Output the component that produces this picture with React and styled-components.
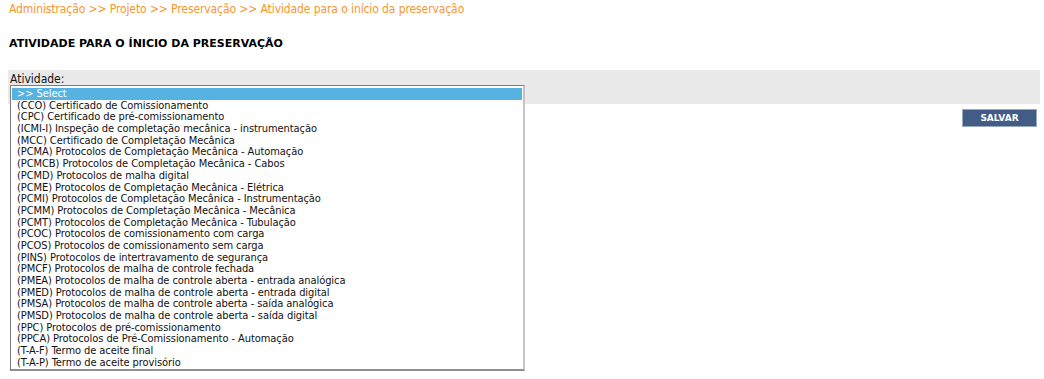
import React from "react";
import styled, { createGlobalStyle } from "styled-components";

const Global = createGlobalStyle`
  html, body { margin: 0; padding: 0; background: #fff; }
  body { font-family: "DejaVu Sans Condensed", "DejaVu Sans", Verdana, sans-serif; }
`;

const Page = styled.div`
  width: 1044px;
  height: 379px;
  overflow: hidden;
  display: flex;
  flex-direction: column;
`;

const Breadcrumb = styled.div`
  padding: 2px 0 0 9px;
  font-size: 12px;
  line-height: 15px;
  letter-spacing: -0.1px;
  color: #f7962f;
`;

const Title = styled.h1`
  margin: 20px 0 0 9px;
  font-family: "DejaVu Sans", Verdana, sans-serif;
  font-size: 11px;
  line-height: 14px;
  font-weight: bold;
  color: #000;
`;

const FieldBar = styled.div`
  margin: 19px 4px 0 8px;
  height: 34px;
  background: #e9e9e9;
  position: relative;
`;

const Label = styled.label`
  display: block;
  padding: 2px 0 0 2px;
  font-size: 12px;
  line-height: 14px;
  color: #111;
`;

const ListBox = styled.div`
  position: absolute;
  left: 2px;
  top: 15px;
  width: 515px;
  height: 286px;
  box-sizing: border-box;
  background: #fff;
  border-top: 1px solid #7a7a7a;
  border-left: 1px solid #7a7a7a;
  border-right: 2px solid #c4c4c4;
  border-bottom: 2px solid #8f8f8f;
  padding: 2px 1px 0 1px;
  z-index: 2;
`;

const Option = styled.div`
  height: 11.7px;
  line-height: 11.7px;
  padding-left: 5px;
  font-size: 11px;
  letter-spacing: -0.07px;
  white-space: nowrap;
  color: ${(p) => (p.$selected ? "#fff" : "#111")};
  background: ${(p) => (p.$selected ? "#56b3e1" : "transparent")};
`;

const Actions = styled.div`
  display: flex;
  justify-content: flex-end;
  padding: 5px 7px 0 0;
`;

const Button = styled.button`
  width: 75px;
  height: 18px;
  border: 1px solid #9aa9c0;
  background: #425c85;
  color: #fff;
  font-family: "DejaVu Sans", Verdana, sans-serif;
  font-size: 9px;
  font-weight: bold;
  padding: 0;
  cursor: pointer;
`;

const options = [
  ">> Select",
  "(CCO) Certificado de Comissionamento",
  "(CPC) Certificado de pré-comissionamento",
  "(ICMI-I) Inspeção de completação mecânica - instrumentação",
  "(MCC) Certificado de Completação Mecânica",
  "(PCMA) Protocolos de Completação Mecânica - Automação",
  "(PCMCB) Protocolos de Completação Mecânica - Cabos",
  "(PCMD) Protocolos de malha digital",
  "(PCME) Protocolos de Completação Mecânica - Elétrica",
  "(PCMI) Protocolos de Completação Mecânica - Instrumentação",
  "(PCMM) Protocolos de Completação Mecânica - Mecânica",
  "(PCMT) Protocolos de Completação Mecânica - Tubulação",
  "(PCOC) Protocolos de comissionamento com carga",
  "(PCOS) Protocolos de comissionamento sem carga",
  "(PINS) Protocolos de intertravamento de segurança",
  "(PMCF) Protocolos de malha de controle fechada",
  "(PMEA) Protocolos de malha de controle aberta - entrada analógica",
  "(PMED) Protocolos de malha de controle aberta - entrada digital",
  "(PMSA) Protocolos de malha de controle aberta - saída analógica",
  "(PMSD) Protocolos de malha de controle aberta - saída digital",
  "(PPC) Protocolos de pré-comissionamento",
  "(PPCA) Protocolos de Pré-Comissionamento - Automação",
  "(T-A-F) Termo de aceite final",
  "(T-A-P) Termo de aceite provisório",
];

export default function App() {
  return (
    <Page>
      <Global />
      <Breadcrumb>
        Administração &gt;&gt; Projeto &gt;&gt; Preservação &gt;&gt; Atividade para o início da preservação
      </Breadcrumb>
      <Title>ATIVIDADE PARA O ÍNICIO DA PRESERVAÇÃO</Title>
      <FieldBar>
        <Label>Atividade:</Label>
        <ListBox role="listbox">
          {options.map((o, i) => (
            <Option key={o} $selected={i === 0} role="option">
              {o}
            </Option>
          ))}
        </ListBox>
      </FieldBar>
      <Actions>
        <Button>SALVAR</Button>
      </Actions>
    </Page>
  );
}
